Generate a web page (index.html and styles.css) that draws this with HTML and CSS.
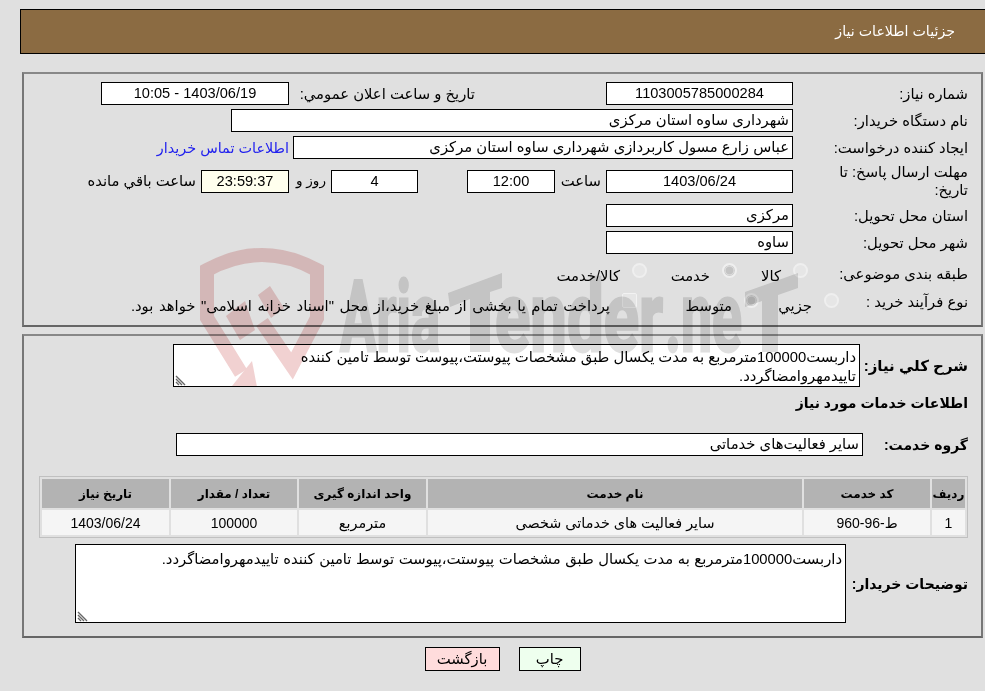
FILE: index.html
```html
<!DOCTYPE html>
<html lang="fa" dir="rtl">
<head>
<meta charset="utf-8">
<title>جزئیات اطلاعات نیاز</title>
<link rel="stylesheet" href="styles.css">
</head>
<body>
<header class="titlebar">جزئیات اطلاعات نیاز</header>

<section class="panel panel-one">
  <div class="row r1">
    <div class="label">شماره نیاز:</div>
    <div class="field w187 center num">1103005785000284</div>
    <div class="label inline gap131 w181">تاریخ و ساعت اعلان عمومي:</div>
    <div class="field w188 center num">1403/06/19 - 10:05</div>
  </div>
  <div class="row r2">
    <div class="label">نام دستگاه خریدار:</div>
    <div class="field w562">شهرداری ساوه استان مرکزی</div>
  </div>
  <div class="row r3">
    <div class="label">ایجاد کننده درخواست:</div>
    <div class="field w500">عباس زارع مسول کاربردازی شهرداری ساوه استان مرکزی</div>
    <a class="contact" href="#">اطلاعات تماس خریدار</a>
  </div>
  <div class="row r4">
    <div class="label">مهلت ارسال پاسخ: تا<br>تاریخ:</div>
    <div class="field w187 center num">1403/06/24</div>
    <div class="label inline w51 pad5">ساعت</div>
    <div class="field w88 center num">12:00</div>
    <div class="spacer49"></div>
    <div class="field w87 center num">4</div>
    <div class="label inline w42 pad5 tight">روز و</div>
    <div class="field w88 center cream num">23:59:37</div>
    <div class="label inline pad5 auto">ساعت باقي مانده</div>
  </div>
  <div class="row r5">
    <div class="label">استان محل تحویل:</div>
    <div class="field w187">مرکزی</div>
  </div>
  <div class="row r6">
    <div class="label">شهر محل تحویل:</div>
    <div class="field w187">ساوه</div>
  </div>
  <div class="row r7">
    <div class="label">طبقه بندی موضوعی:</div>
    <div class="choices">
      <label class="choice c-kala"><input type="radio" disabled>کالا</label>
      <label class="choice c-khedmat"><input type="radio" disabled checked>خدمت</label>
      <label class="choice"><input type="radio" disabled>کالا/خدمت</label>
    </div>
  </div>
  <div class="row r8">
    <div class="label">نوع فرآیند خرید :</div>
    <div class="choices second">
      <label class="choice c-jozi"><input type="radio" disabled>جزيي</label>
      <label class="choice c-motavaset"><input type="radio" disabled checked>متوسط</label>
      <label class="choice wide"><input type="checkbox" disabled>پرداخت تمام یا بخشی از مبلغ خرید،از محل "اسناد خزانه اسلامی" خواهد بود.</label>
    </div>
  </div>
</section>

<section class="panel panel-two">
  <div class="row desc">
    <div class="label bold lab-desc">شرح کلي نياز:</div>
    <div class="notewrap">
      <textarea class="note short" readonly>داربست100000مترمربع به مدت یکسال طبق مشخصات پیوستت،پیوست توسط تامین کننده
تاییدمهروامضاگردد.</textarea>
      <svg class="grip" viewBox="0 0 12 12" width="12" height="12" aria-hidden="true"><path d="M1,2 L10,11 M1,5 L7,11 M1,8 L4,11" stroke="#666" stroke-width="1.4" fill="none"/></svg>
    </div>
  </div>
  <h2 class="subhead">اطلاعات خدمات مورد نیاز</h2>
  <div class="row group">
    <div class="label bold lab-group">گروه خدمت:</div>
    <div class="field w687">سایر فعالیت‌های خدماتی</div>
  </div>
  <table class="items">
    <thead>
      <tr><th class="c1">ردیف</th><th class="c2">کد خدمت</th><th class="c3">نام خدمت</th><th class="c4">واحد اندازه گیری</th><th class="c5">تعداد / مقدار</th><th class="c6">تاریخ نیاز</th></tr>
    </thead>
    <tbody>
      <tr><td class="num">1</td><td class="num">ط-96-960</td><td>سایر فعالیت های خدماتی شخصی</td><td>مترمربع</td><td class="num">100000</td><td class="num">1403/06/24</td></tr>
    </tbody>
  </table>
  <div class="row buyer">
    <div class="label bold lab-buyer">توضیحات خریدار:</div>
    <div class="notewrap">
      <textarea class="note tall" readonly>داربست100000مترمربع به مدت یکسال طبق مشخصات پیوستت،پیوست توسط تامین کننده تاییدمهروامضاگردد.</textarea>
      <svg class="grip" viewBox="0 0 12 12" width="12" height="12" aria-hidden="true"><path d="M1,2 L10,11 M1,5 L7,11 M1,8 L4,11" stroke="#666" stroke-width="1.4" fill="none"/></svg>
    </div>
  </div>
</section>

<div class="actions">
  <button class="btn print" type="button">چاپ</button>
  <button class="btn back" type="button">بازگشت</button>
</div>

<svg class="watermark" viewBox="0 0 985 691" width="985" height="691" aria-hidden="true">
  <g fill="#c23a3a" opacity=".23">
    <path fill="none" stroke="#c23a3a" stroke-width="14" d="M241,373 L207,318 L207,270 Q262,240 317,270 L317,318 L292,366 L262,322"/>
    <path d="M232,386 L252,361 L257,387 Z"/>
    <path d="M226,316 L245,301 L255,330 L240,340 Z"/>
    <path d="M258,295 L270,286 L284,308 L271,318 Z"/>
  </g>
  <g fill="#6e6e6e" stroke="#6e6e6e" stroke-width="3" opacity=".22" font-family="'Roboto','Liberation Sans',sans-serif" font-weight="700">
    <text class="wm" x="340" y="351" font-size="98" textLength="100" lengthAdjust="spacingAndGlyphs" direction="ltr">Aria</text>
    <text class="wm" x="495" y="351" font-size="98" textLength="168" lengthAdjust="spacingAndGlyphs" direction="ltr">ender</text>
    <text class="wm" x="665" y="351" font-size="98" textLength="77" lengthAdjust="spacingAndGlyphs" direction="ltr">.ne</text>
    <path stroke="none" d="M448,293 L502,273 L502,288 L490,292 L490,352 L470,352 L470,299 L450,307 Z"/>
    <path stroke="none" d="M745,292 L798,273 L798,288 L778,295 L778,352 L762,352 L762,301 L745,307 Z"/>
  </g>
</svg>
</body>
</html>
```
FILE: styles.css
```css
* { box-sizing: border-box; }
html, body { margin: 0; height: 691px; overflow: hidden; }
body {
  position: relative;
  background: #e0e0e0;
  color: #000;
  font-family: "Liberation Sans", "DejaVu Sans", sans-serif;
  font-size: 14.8px;
  line-height: 18px;
  padding: 9px 0 0 0;
}
.num { font-size: 14.6px; }
.titlebar {
  margin-left: 20px;
  height: 45px;
  background: #8b6b42;
  border: 1px solid #000;
  border-right: 0;
  color: #fff;
  font-size: 14.2px;
  line-height: 43px;
  padding-right: 30px;
}
.panel {
  margin: 0 2px 0 22px;
  border: 2px solid #777;
  border-color: #888 #777 #666 #777;
}
.panel-one { margin-top: 18px; height: 255px; padding-top: 8px; }
.panel-two { margin-top: 7px; height: 304px; padding-top: 8px; }
.row { display: flex; align-items: center; }
.label { flex: none; width: 188px; padding-right: 13px; }
.bold { font-weight: 700; font-size: 14px; }
.field {
  flex: none;
  height: 23px;
  background: #fff;
  border: 1px solid #000;
  padding: 0 3px;
  line-height: 20px;
  white-space: nowrap;
  overflow: hidden;
}
.center { text-align: center; }
.cream { background: #ffffee; }
.w187 { width: 187px; }
.w188 { width: 188px; }
.w88 { width: 88px; }
.w87 { width: 87px; }
.w500 { width: 500px; }
.w562 { width: 562px; }
.w687 { width: 687px; }
.inline { width: auto; padding-right: 0; }
.gap131 { margin-right: 131px; }
.w181 { width: 186px; }
.w51 { width: 51px; }
.w42 { width: 42px; }
.auto { width: auto; }
.pad5 { padding-right: 5px; }
.tight { font-size: 13.6px; }
.spacer49 { flex: none; width: 49px; }
.contact { padding-right: 4px; color: #2222ee; font-size: 14.4px; text-decoration: none; }
.r2 { margin-top: 4px; }
.r3 { margin-top: 4px; }
.r4 { margin-top: 4px; }
.r5 { margin-top: 5px; }
.r6 { margin-top: 4px; }
.r7 { margin-top: 10px; height: 24px; }
.r7 > .label { margin-bottom: 4px; }
.r8 { margin-top: 3px; height: 30px; }
.r8 > .label { margin-bottom: 8px; }
.choices { display: flex; align-items: center; }
.choice { display: flex; align-items: center; white-space: nowrap; }
.wide { word-spacing: 1.5px; }
.choice input {
  appearance: none;
  margin: 0 0 0 12px;
  width: 15px;
  height: 15px;
  position: relative;
  top: -6px;
  flex: none;
  background: #e6e6e6;
  border: 2px solid #efefef;
}
.choice input[type="radio"] { border-radius: 50%; }
.choice input[type="radio"]:checked { background: radial-gradient(circle, #c4c4c4 0 3.5px, #e6e6e6 4.5px); border-color: #efefef; box-shadow: inset 0 0 0 1px #cfcfcf; }
.choice input[type="checkbox"] { border-radius: 2px; border-width: 1px; border-color: #f2f2f2; }
.c-kala { width: 71px; margin-right: -15px; }
.c-khedmat { width: 90px; }
.second { margin-right: -46px; }
.c-jozi { width: 80px; }
.c-motavaset { width: 122px; }
.desc { align-items: flex-start; }
.notewrap { position: relative; flex: none; }
.note {
  display: block;
  background: #fff;
  border: 1px solid #000;
  border-radius: 0;
  padding: 3px 3px 0;
  margin: 0;
  font: inherit;
  line-height: 19px;
  color: #000;
  outline: none;
  resize: none;
  overflow: hidden;
}
.grip { position: absolute; left: 2px; bottom: 1px; }
.short { width: 687px; height: 43px; }
.tall { width: 771px; height: 79px; padding: 5px 3px 0; word-spacing: .4px; }
.lab-desc { width: 121px; padding-top: 13px; padding-right: 13px; white-space: nowrap; font-size: 15px; }
.subhead { margin: 7px 13px 0 0; font-size: 14px; line-height: 18px; font-weight: 700; }
.group { margin-top: 21px; }
.lab-group { width: 118px; }
.items {
  margin: 20px 13px 0 0;
  width: 929px;
  table-layout: fixed;
  border-collapse: separate;
  border-spacing: 2px;
  border: 1px solid #c0c0c0;
}
.items th { background: #b3b3b3; height: 29px; padding: 0; font-size: 12px; }
.items td { background: #f5f5f5; height: 25px; padding: 0; text-align: center; font-size: 14.4px; }
.items td.num { font-size: 14px; }
.c1 { width: 33px; }
.c2 { width: 126px; }
.c3 { width: 374px; }
.c4 { width: 127px; }
.c5 { width: 126px; }
.c6 { width: 127px; }
.buyer { margin-top: 6px; }
.lab-buyer { width: 135px; white-space: nowrap; }
.actions { display: flex; justify-content: center; gap: 19px; margin-top: 9px; padding-left: 20px; }
.btn {
  height: 24px;
  padding: 0;
  border: 1px solid #000;
  border-radius: 0;
  font: inherit;
  color: #000;
}
.print { width: 62px; background: #eeffee; }
.back { width: 75px; background: #ffdcdc; }
.watermark { position: absolute; left: 0; top: 0; pointer-events: none; mix-blend-mode: multiply; }
.wm { direction: ltr; }
```
